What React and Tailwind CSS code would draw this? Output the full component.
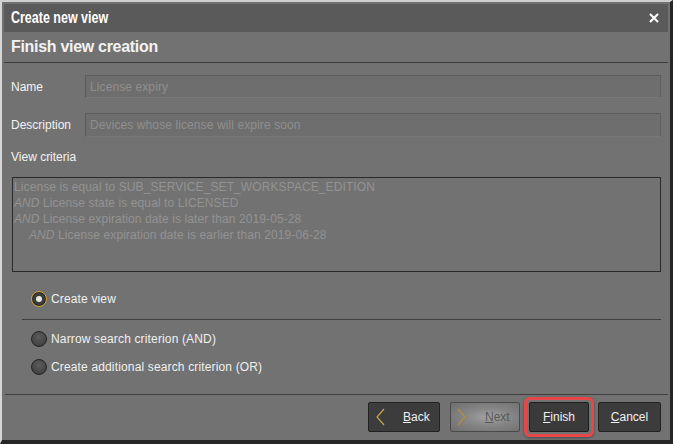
import React from 'react';

const font = { fontFamily: '"Liberation Sans", Arial, sans-serif' };

const Radio = ({ checked, label }) => (
  <div className="flex items-center h-[20px]">
    {checked ? (
      <span className="w-[16px] h-[16px] rounded-full border border-[#d9a52c] bg-[#3d3d3d] flex items-center justify-center shadow-[inset_0_0_0_1px_#2a2a2a]">
        <span className="w-[6px] h-[6px] rounded-full bg-[#e6e6e6]" />
      </span>
    ) : (
      <span className="w-[16px] h-[16px] rounded-full border border-[#232323] bg-[radial-gradient(circle_at_50%_35%,#5c5c5c,#3a3a3a)]" />
    )}
    <span className="ml-[4px] text-[12px] tracking-[0.15px] text-[#f0f0f0]">{label}</span>
  </div>
);

const Chevron = ({ dir, color }) => (
  <svg width="9" height="18" viewBox="0 0 9 18" className="shrink-0">
    {dir === 'left' ? (
      <polyline points="8,1 1,9 8,17" fill="none" stroke={color} strokeWidth="1.2" />
    ) : (
      <polyline points="1,1 8,9 1,17" fill="none" stroke={color} strokeWidth="1.2" />
    )}
  </svg>
);

const Field = ({ label, value, h }) => (
  <div className="flex items-center" style={{ height: h }}>
    <div className="w-[74px] text-[12px] text-[#f2f2f2]">{label}</div>
    <div className="flex-1 h-full flex items-center pl-[4px] bg-[#6e6e6e] border-t border-l border-[#5c5c5c] border-r-[#606060] border-r border-b border-b-[#787878] text-[12px] tracking-[0.1px] text-[#8e8e8e]">
      {value}
    </div>
  </div>
);

export default function App() {
  return (
    <div
      className="w-[673px] h-[444px] bg-[#727272] flex flex-col border-l-2 border-t-2 border-l-[#d6d6d6] border-t-[#cfcfcf] border-r-[3px] border-b-4 border-r-[#262626] border-b-[#262626] p-[2px] pb-0 overflow-hidden"
      style={font}
    >
      <div className="h-[28px] shrink-0 bg-[#5a5a5a] flex items-center justify-between pl-[7px] pr-[9px]">
        <span className="inline-block origin-left scale-x-[0.78] text-[16px] font-bold text-white">Create new view</span>
        <svg width="10" height="10" viewBox="0 0 10 10">
          <path d="M1 1 L9 9 M9 1 L1 9" stroke="#ffffff" strokeWidth="2" />
        </svg>
      </div>

      <div className="h-[31px] shrink-0 flex items-center pl-[7px] border-b border-[#3c3c3c]">
        <span className="text-[16px] font-bold text-[#f2f2f2] tracking-[-0.3px]">Finish view creation</span>
      </div>

      <div className="px-[7px] flex flex-col">
        <div className="mt-[12px]">
          <Field label="Name" value="License expiry" h={23} />
        </div>
        <div className="mt-[15px]">
          <Field label="Description" value="Devices whose license will expire soon" h={24} />
        </div>
        <div className="mt-[13px] h-[14px] flex items-center text-[12px] text-[#f2f2f2]">View criteria</div>
        <div className="mt-[13px] ml-[1px] h-[95px] border border-[#2a2a2a] pl-[1px] pt-[1px] text-[12px] leading-[16px] tracking-[0.1px] text-[#939393]">
          <div>License is equal to SUB_SERVICE_SET_WORKSPACE_EDITION</div>
          <div><i>AND</i> License state is equal to LICENSED</div>
          <div><i>AND</i> License expiration date is later than 2019-05-28</div>
          <div className="pl-[15px]"><i>AND</i> License expiration date is earlier than 2019-06-28</div>
        </div>

        <div className="mt-[17px] pl-[20px]">
          <Radio checked label="Create view" />
        </div>
        <div className="mt-[10px] ml-[11px] h-px bg-[#3e3e3e]" />
        <div className="mt-[9px] pl-[20px]">
          <Radio label="Narrow search criterion (AND)" />
        </div>
        <div className="mt-[8px] pl-[20px]">
          <Radio label="Create additional search criterion (OR)" />
        </div>
      </div>

      <div className="mt-[17px] ml-[1px] h-px bg-[#3e3e3e]" />

      <div className="mt-[7px] flex justify-end pr-[7px] text-[12px]">
        <button className="w-[72px] h-[30px] flex items-center pl-[7px] bg-[#3c3c3c] border border-[#222] rounded-[2px] text-[#f0f0f0]">
          <Chevron dir="left" color="#c9a24a" />
          <span className="ml-[18px]"><u>B</u>ack</span>
        </button>
        <button className="ml-[10px] w-[70px] h-[30px] flex items-center pl-[6px] bg-[radial-gradient(ellipse_at_55%_50%,#a2a2a2,#858585_45%,#6e6e6e)] border border-[#4a4a4a] rounded-[2px] text-[#585858]">
          <Chevron dir="right" color="#b38d45" />
          <span className="ml-[19px]"><u>N</u>ext</span>
        </button>
        <button className="relative ml-[9px] w-[60px] h-[30px] flex items-center justify-center bg-[#3a3a3a] border border-[#1e1e1e] rounded-[2px] text-[#f0f0f0]">
          <span><u>F</u>inish</span>
          <span className="absolute -left-[6px] -right-[6px] -top-[6px] -bottom-[6px] border-[3px] border-[#e8474a] rounded-[6px] shadow-[0_1px_3px_rgba(0,0,0,0.35)]" />
        </button>
        <button className="ml-[9px] w-[63px] h-[30px] flex items-center justify-center bg-[#3c3c3c] border border-[#222] rounded-[2px] text-[#f0f0f0]">
          <span><u>C</u>ancel</span>
        </button>
      </div>
    </div>
  );
}
